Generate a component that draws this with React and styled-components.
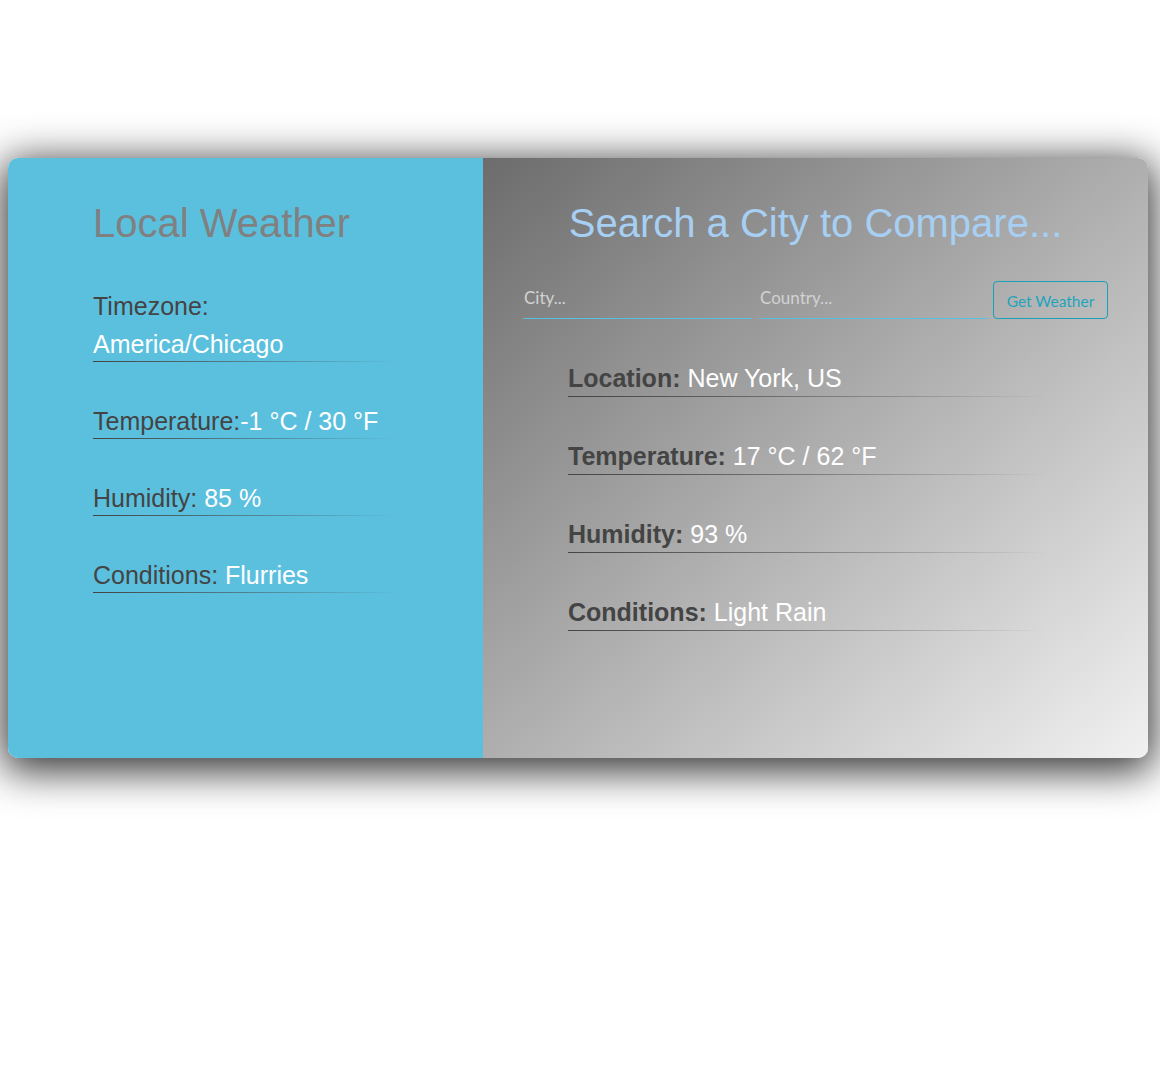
import React from "react";
import styled, { createGlobalStyle } from "styled-components";

const GlobalStyle = createGlobalStyle`
  html, body {
    margin: 0;
    padding: 0;
    background: #ffffff;
    overflow: visible;
  }
  body {
    font-family: "Liberation Sans", Arial, sans-serif;
  }
  #root { overflow: visible; }
  * { box-sizing: border-box; }
`;

const Page = styled.main`
  width: 1160px;
  min-height: 1082px;
  padding: 158px 8px 0;
`;

const Card = styled.div`
  width: 1140px;
  height: 600px;
  display: flex;
  border-radius: 10px;
  box-shadow: 0 8px 40px 5px rgba(0, 0, 0, 0.8);
`;

const LocalPanel = styled.section`
  width: 475px;
  flex: none;
  background: #5bc0de;
  border-radius: 10px 0 0 10px;
  padding: 42px 85px 0;
`;

const ComparePanel = styled.section`
  flex: 1;
  background: linear-gradient(to bottom right, #6c6c6c, #f1f1f1);
  border-radius: 0 10px 10px 0;
  padding: 42px 40px 0;
`;

const Heading = styled.h1`
  margin: 0;
  font-family: "Liberation Sans", Arial, sans-serif;
  font-size: 40px;
  font-weight: normal;
  line-height: 46px;
  color: ${(p) => p.$color};
  text-align: ${(p) => p.$align || "left"};
`;

const List = styled.div`
  display: flex;
  flex-direction: column;
  gap: 40px;
  margin-top: ${(p) => p.$top}px;
  padding-left: ${(p) => p.$indent || 0}px;
`;

const Item = styled.div`
  width: ${(p) => p.$width};
  font-size: 25px;
  line-height: 38px;
  color: #444444;

  &::after {
    content: "";
    display: block;
    height: 1px;
    margin-top: ${(p) => p.$lineShift}px;
    background: linear-gradient(to right, #444444, rgba(68, 68, 68, 0.5) 50%, rgba(68, 68, 68, 0));
  }
`;

const Label = styled.span`
  font-weight: ${(p) => (p.$bold ? "bold" : "normal")};
`;

const Value = styled.span`
  color: #ffffff;
`;

const Form = styled.form`
  display: flex;
  align-items: flex-end;
  margin-top: 35px;
  height: 38px;
`;

const Input = styled.input`
  flex: 1;
  min-width: 0;
  height: 37px;
  margin-right: ${(p) => p.$gap}px;
  padding: 0 1px 5px;
  border: none;
  border-bottom: 1px solid #5bc0de;
  background: transparent;
  outline: none;
  font-family: Lato, "Open Sans", sans-serif;
  font-size: 17px;
  color: #ffffff;

  &::placeholder {
    color: #d2d2d2;
  }
`;

const Button = styled.button`
  width: 115px;
  height: 38px;
  flex: none;
  border: 1px solid #17a2b8;
  border-radius: 4px;
  background: transparent;
  color: #1ea5bd;
  font-family: Lato, "Open Sans", sans-serif;
  font-size: 15.5px;
  padding: 2px 0 0;
  cursor: pointer;
`;

const local = [
  { label: "Timezone:", value: " America/Chicago" },
  { label: "Temperature:", value: "-1 °C / 30 °F" },
  { label: "Humidity:", value: " 85 %" },
  { label: "Conditions:", value: " Flurries" },
];

const remote = [
  { label: "Location:", value: " New York, US" },
  { label: "Temperature:", value: " 17 °C / 62 °F" },
  { label: "Humidity:", value: " 93 %" },
  { label: "Conditions:", value: " Light Rain" },
];

export default function App() {
  return (
    <>
      <GlobalStyle />
      <Page>
        <Card>
          <LocalPanel>
            <Heading $color="#808080">Local Weather</Heading>
            <List $top={41}>
              {local.map((r) => (
                <Item key={r.label} $width="100%" $lineShift={-2}>
                  <Label>{r.label}</Label>
                  <Value>{r.value}</Value>
                </Item>
              ))}
            </List>
          </LocalPanel>
          <ComparePanel>
            <Heading $color="#a6cff3" $align="center">
              Search a City to Compare...
            </Heading>
            <Form onSubmit={(e) => e.preventDefault()}>
              <Input placeholder="City..." $gap={7} />
              <Input placeholder="Country..." $gap={5} />
              <Button type="submit">Get Weather</Button>
            </Form>
            <List $top={40} $indent={45}>
              {remote.map((r) => (
                <Item key={r.label} $width="480px" $lineShift={-1}>
                  <Label $bold>{r.label}</Label>
                  <Value>{r.value}</Value>
                </Item>
              ))}
            </List>
          </ComparePanel>
        </Card>
      </Page>
    </>
  );
}
